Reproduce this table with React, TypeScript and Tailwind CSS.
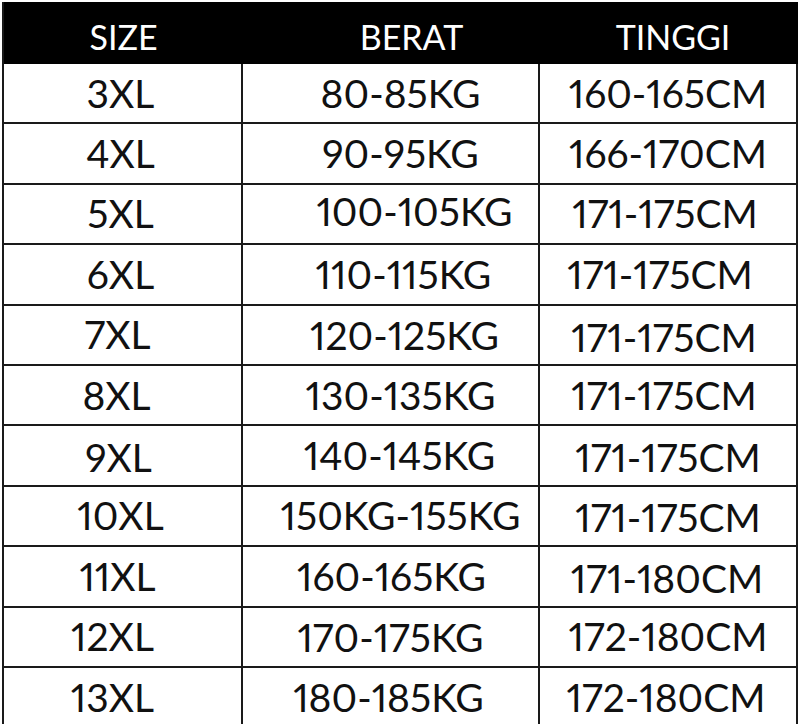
import React from 'react';

// [size, berat, tinggi, nudge size, nudge berat, nudge tinggi]
const rows = [
  ['3XL', '80-85KG', '160-165CM', '', '', ''],
  ['4XL', '90-95KG', '166-170CM', '', '', ''],
  ['5XL', '100-105KG', '171-175CM', '', 'translate-x-[14px] -translate-y-[2px]', '-translate-x-[3px]'],
  ['6XL', '110-115KG', '171-175CM', '', 'translate-x-[3px]', '-translate-x-[8px]'],
  ['7XL', '120-125KG', '171-175CM', '-translate-x-[3px]', 'translate-x-[4px] translate-y-[1px]', '-translate-x-[4px] translate-y-[3px]'],
  ['8XL', '130-135KG', '171-175CM', '-translate-x-[4px]', '', '-translate-x-[4px]'],
  ['9XL', '140-145KG', '171-175CM', '-translate-x-[2px] translate-y-[2px]', '-translate-x-[1px]', 'translate-y-[2px]'],
  ['10XL', '150KG-155KG', '171-175CM', '', '', 'translate-y-[2px]'],
  ['11XL', '160-165KG', '171-180CM', '-translate-x-[3px]', '-translate-x-[9px]', '-translate-x-[1px] translate-y-[2px]'],
  ['12XL', '170-175KG', '172-180CM', '-translate-x-[8px]', '-translate-x-[10px] translate-y-[1px]', ''],
  ['13XL', '180-185KG', '172-180CM', '-translate-x-[8px]', '-translate-x-[12px]', '-translate-x-[2px]'],
];

export default function App() {
  return (
    <div className="w-[800px] h-[724px] overflow-hidden bg-white pt-[2px] pl-[2px] font-['Lato',sans-serif] proportional-nums text-[#111]">
      <div className="w-[796px] border-l-2 border-[#1a1a1a]">
        {/* Header */}
        <div className="grid grid-cols-[239px_297px_258px] h-[62px] bg-black text-white text-[34px] leading-none">
          <div className="flex items-center justify-center pt-2">SIZE</div>
          <div className="flex items-center justify-center pt-2 pl-10">BERAT</div>
          <div className="flex items-center justify-center pt-2 pl-2">TINGGI</div>
        </div>

        {rows.map(([size, berat, tinggi, n1, n2, n3]) => (
          <div
            key={size}
            className="grid grid-cols-[239px_297px_258px] h-[60.4px] border-b-2 border-[#1a1a1a] text-[39px] leading-none"
          >
            <div className="flex items-center justify-center border-r-2 border-[#1a1a1a] pr-1">
              <span className={n1}>{size}</span>
            </div>
            <div className="flex items-center justify-center border-r-2 border-[#1a1a1a] pl-5">
              <span className={n2}>{berat}</span>
            </div>
            <div className="flex items-center justify-center border-r-2 border-[#1a1a1a]">
              <span className={n3}>{tinggi}</span>
            </div>
          </div>
        ))}
      </div>
    </div>
  );
}
